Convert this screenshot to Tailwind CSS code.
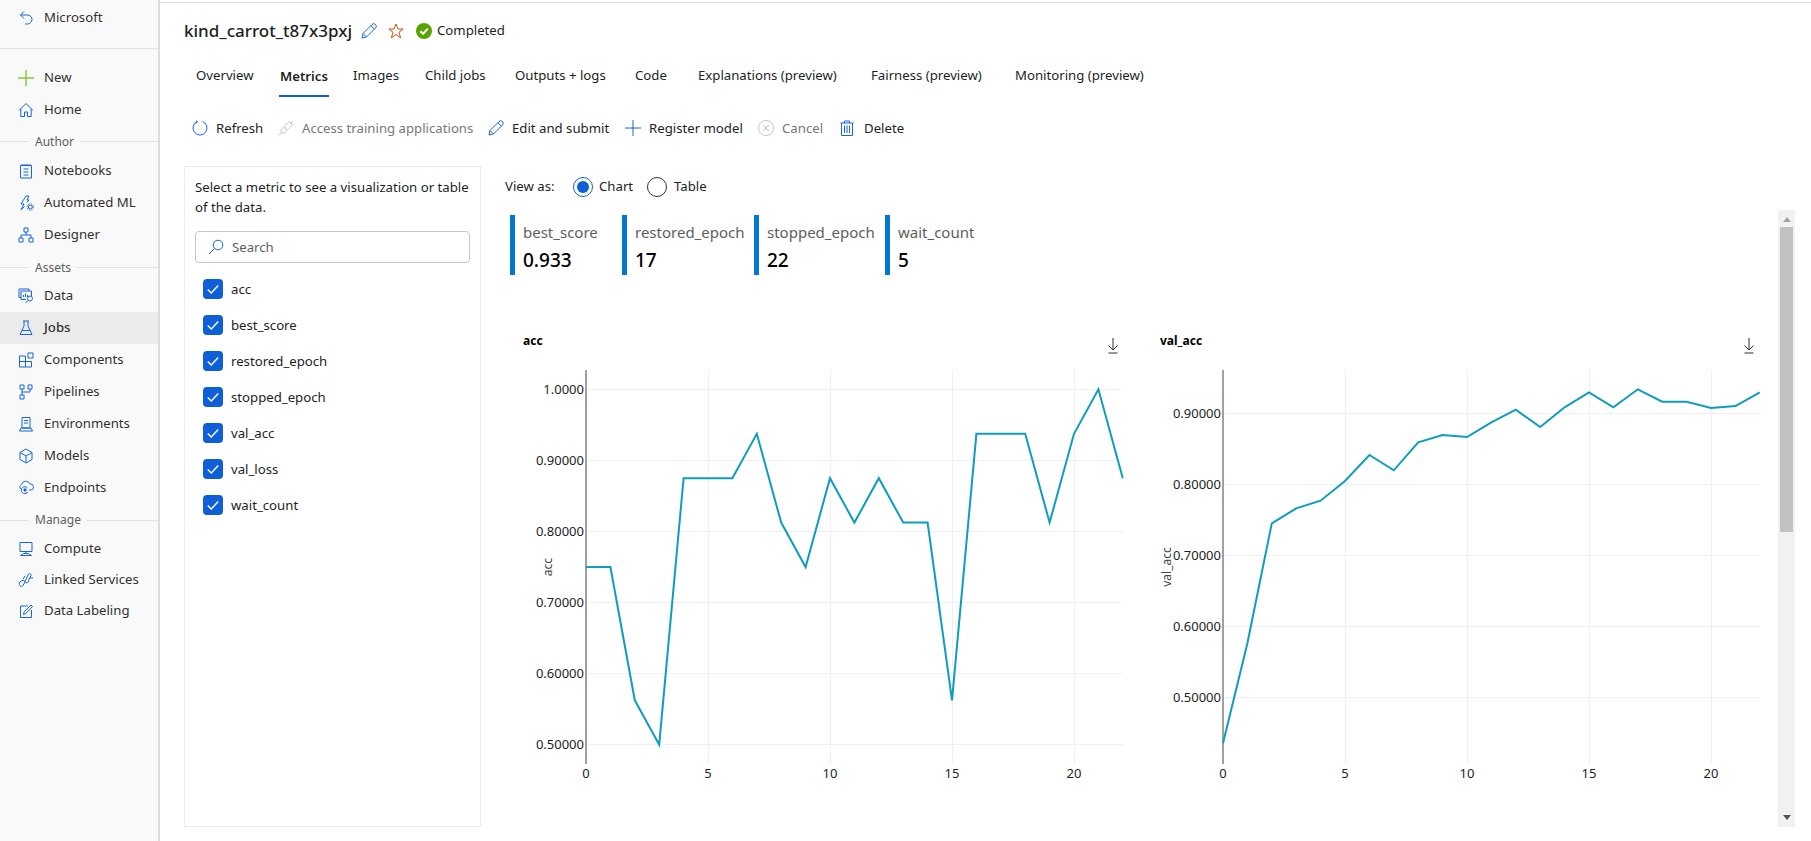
<!DOCTYPE html>
<html lang="en">
<head>
    <meta charset="UTF-8">
    <title>kind_carrot_t87x3pxj - Metrics</title>
    <script src="https://cdn.jsdelivr.net/npm/@tailwindcss/browser@4"></script>
</head>
<body class="relative flex w-[1811px] h-[841px] overflow-hidden bg-white text-[#323130] text-[13.2px] font-['Noto_Sans',sans-serif]">

    <!-- sidebar -->
    <nav class="flex-none w-[160px] h-full bg-[#f9f9f9] border-r-2 border-[#dcdcdc] pt-[2px]">
        <div class="flex items-center h-8 pl-[18px] gap-[10px]">
            <svg class="w-4 h-4 flex-none text-[#1565e0]" viewBox="0 0 16 16" fill="none" stroke="currentColor"><path d="M6 1.5L2.5 5L6 8.5M2.5 5H9.5A4.5 4.5 0 0 1 9.5 14H7"/></svg>
            <span>Microsoft</span>
        </div>
        <div class="h-[15px] border-b border-[#e1e1e1]"></div>
        <div class="flex items-center h-8 mt-[13px] pl-[18px] gap-[10px]">
            <svg class="w-4 h-4 flex-none text-[#8cc63f]" viewBox="0 0 16 16" fill="none" stroke="currentColor" stroke-width="1.5"><path d="M8 0V16M0 8H16"/></svg>
            <span>New</span>
        </div>
        <div class="flex items-center h-8 pl-[18px] gap-[10px]">
            <svg class="w-4 h-4 flex-none text-[#1565e0]" viewBox="0 0 16 16" fill="none" stroke="currentColor"><path d="M1 8.5L8 1.5L15 8.5M2.8 7V14.5H6.5V10H9.5V14.5H13.2V7"/></svg>
            <span>Home</span>
        </div>
        <div class="flex items-center h-[29px] pt-[2px] gap-[6px] text-[12px] text-[#605e5c]">
            <div class="w-[29px] h-px bg-[#e1e1e1]"></div><span>Author</span><div class="flex-1 h-px bg-[#e1e1e1]"></div>
        </div>
        <div class="flex items-center h-8 pl-[18px] gap-[10px]">
            <svg class="w-4 h-4 flex-none text-[#1565e0]" viewBox="0 0 16 16" fill="none" stroke="currentColor"><path d="M2.5 2.5H13.5V15H2.5ZM4 1V2.5M6 1V2.5M8 1V2.5M10 1V2.5M12 1V2.5M5.5 6H10.5M5.5 9H10.5M5.5 12H10.5"/></svg>
            <span>Notebooks</span>
        </div>
        <div class="flex items-center h-8 pl-[18px] gap-[10px]">
            <svg class="w-4 h-4 flex-none text-[#1565e0]" viewBox="0 0 16 16" fill="none" stroke="currentColor"><path d="M8 1H11L9 5H11L9 7.5M8 1L3 9H6L3 15L6.5 11.5"/><circle cx="12.3" cy="12" r="2"/><circle cx="12.3" cy="12" r="3.2" stroke-dasharray="1.2 1.3"/></svg>
            <span>Automated ML</span>
        </div>
        <div class="flex items-center h-8 pl-[18px] gap-[10px]">
            <svg class="w-4 h-4 flex-none text-[#1565e0]" viewBox="0 0 16 16" fill="none" stroke="currentColor"><path d="M6 1H10V5H6ZM1 11H5V15H1ZM11 11H15V15H11ZM8 5V8M3 11V8H13V11"/></svg>
            <span>Designer</span>
        </div>
        <div class="flex items-center h-[29px] pt-[4px] gap-[6px] text-[12px] text-[#605e5c]">
            <div class="w-[29px] h-px bg-[#e1e1e1]"></div><span>Assets</span><div class="flex-1 h-px bg-[#e1e1e1]"></div>
        </div>
        <div class="flex items-center h-8 pl-[18px] gap-[10px]">
            <svg class="w-4 h-4 flex-none text-[#1565e0]" viewBox="0 0 16 16" fill="none" stroke="currentColor"><path d="M3 9.5H1V1H11V3M3 3H13.5V8M3 3V11.5H8M5.5 9V7M7.5 9V5.5M9.5 9V7"/><circle cx="12" cy="10.5" r="2.5"/><path d="M10 12.5L7.5 15"/></svg>
            <span>Data</span>
        </div>
        <div class="flex items-center h-8 pl-[18px] gap-[10px] bg-[#ebebeb] font-medium">
            <svg class="w-4 h-4 flex-none text-[#1565e0]" viewBox="0 0 16 16" fill="none" stroke="currentColor"><path d="M5 1H11M6 1V6L2 14.5H14L10 6V1M4 10.5H12"/></svg>
            <span>Jobs</span>
        </div>
        <div class="flex items-center h-8 pl-[18px] gap-[10px]">
            <svg class="w-4 h-4 flex-none text-[#1565e0]" viewBox="0 0 16 16" fill="none" stroke="currentColor"><path d="M1.5 4H7.5V15H1.5ZM1.5 9.5H13.5V15H7.5M10 1H15V6H10Z"/></svg>
            <span>Components</span>
        </div>
        <div class="flex items-center h-8 pl-[18px] gap-[10px]">
            <svg class="w-4 h-4 flex-none text-[#1565e0]" viewBox="0 0 16 16" fill="none" stroke="currentColor"><path d="M2 1H6V5H2ZM10 1H14V5H10ZM2 11H6V15H2ZM4 5V11M4 8H12V5"/></svg>
            <span>Pipelines</span>
        </div>
        <div class="flex items-center h-8 pl-[18px] gap-[10px]">
            <svg class="w-4 h-4 flex-none text-[#1565e0]" viewBox="0 0 16 16" fill="none" stroke="currentColor"><path d="M4 1.5H12V12H4ZM6 4.5H10M6 7H10M1.5 15L3 12H13L14.5 15Z"/></svg>
            <span>Environments</span>
        </div>
        <div class="flex items-center h-8 pl-[18px] gap-[10px]">
            <svg class="w-4 h-4 flex-none text-[#1565e0]" viewBox="0 0 16 16" fill="none" stroke="currentColor"><path d="M8 1L14 4.5V11.5L8 15L2 11.5V4.5ZM2 4.5L8 8L14 4.5M8 8V15"/></svg>
            <span>Models</span>
        </div>
        <div class="flex items-center h-8 pl-[18px] gap-[10px]">
            <svg class="w-4 h-4 flex-none text-[#1565e0]" viewBox="0 0 16 16" fill="none" stroke="currentColor"><path d="M2.5 9A3 3 0 0 1 3.5 4.5A4.5 4.5 0 0 1 12 4A3 3 0 0 1 13 10H11M9.5 8A3.5 3.5 0 1 0 9.5 12.5L8 13"/><circle cx="7" cy="10" r="1.2" fill="currentColor"/></svg>
            <span>Endpoints</span>
        </div>
        <div class="flex items-center h-[29px] pt-[3px] gap-[6px] text-[12px] text-[#605e5c]">
            <div class="w-[29px] h-px bg-[#e1e1e1]"></div><span>Manage</span><div class="flex-1 h-px bg-[#e1e1e1]"></div>
        </div>
        <div class="flex items-center h-8 pl-[18px] gap-[10px]">
            <svg class="w-4 h-4 flex-none text-[#1565e0]" viewBox="0 0 16 16" fill="none" stroke="currentColor"><path d="M2 1.5H14V10.5H2ZM8 10.5V13M2.5 14.5H13.5L10.5 12.5H5.5Z"/></svg>
            <span>Compute</span>
        </div>
        <div class="flex items-center h-[30px] pl-[18px] gap-[10px]">
            <svg class="w-4 h-4 flex-none text-[#1565e0]" viewBox="0 0 16 16" fill="none" stroke="currentColor"><path d="M1.5 12.5A1.8 1.8 0 0 1 2 10L4 8.5A1.8 1.8 0 0 1 6.5 11L4.5 14A1.8 1.8 0 0 1 1.5 12.5ZM7 9.5L10.5 2A1.5 1.5 0 0 1 13 3.5L10.5 8.5A1.7 1.7 0 0 1 7 9.5ZM12 6H15M5 7L7 4"/></svg>
            <span>Linked Services</span>
        </div>
        <div class="flex items-center h-8 pl-[18px] gap-[10px]">
            <svg class="w-4 h-4 flex-none text-[#1565e0]" viewBox="0 0 16 16" fill="none" stroke="currentColor"><path d="M13.5 7V14.5H2.5V3H10M5.5 11.5L6.2 8.8L13 2L14.5 3.5L7.8 10.5Z"/></svg>
            <span>Data Labeling</span>
        </div>
    </nav>

    <!-- main -->
    <main class="flex-1 min-w-0 mt-[2px] border-t border-[#e1e1e1]">

        <div class="flex items-center h-[56px] pl-[24px]">
            <h1 class="w-[177px] flex-none text-[17px] font-medium text-[#201f1e]">kind_carrot_t87x3pxj</h1>
            <svg class="w-4 h-4 flex-none mr-[11px] text-[#1565e0]" viewBox="0 0 16 16" fill="none" stroke="currentColor"><path d="M1 15L2 10.5L11 1.5A1.6 1.6 0 0 1 14.5 5L5.5 14ZM2 10.5L5.5 14M9.8 2.7L13.3 6.2"/></svg>
            <svg class="w-4 h-4 flex-none mr-[12px] text-[#ca5010]" viewBox="0 0 16 16" fill="none" stroke="currentColor"><path d="M8 1L10 6H15.2L11 9.3L12.6 14.8L8 11.6L3.4 14.8L5 9.3L.8 6H6Z"/></svg>
            <svg class="w-4 h-4 flex-none mr-[5px]" viewBox="0 0 16 16" fill="none"><circle cx="8" cy="8" r="8" fill="#57a300"/><path d="M4.3 8.2L7 10.8L11.8 5.6" stroke="#fff" stroke-width="2"/></svg>
            <span class="text-[#201f1e]">Completed</span>
        </div>

        <div class="flex items-start h-[38px] pl-[36px] pt-[7px] text-[#201f1e]">
            <div class="w-[84px] flex-none">Overview</div>
            <div class="w-[73px] flex-none"><span class="inline-block -mx-px px-px pb-[9px] border-b-2 border-[#0f5fd7] font-semibold leading-5">Metrics</span></div>
            <div class="w-[72px] flex-none">Images</div>
            <div class="w-[90px] flex-none">Child jobs</div>
            <div class="w-[120px] flex-none">Outputs + logs</div>
            <div class="w-[63px] flex-none">Code</div>
            <div class="w-[173px] flex-none">Explanations (preview)</div>
            <div class="w-[144px] flex-none">Fairness (preview)</div>
            <div class="flex-none">Monitoring (preview)</div>
        </div>

        <div class="flex items-center h-8 mt-[15px] pl-[32px] text-[#201f1e]">
            <div class="flex items-center w-[86px] flex-none gap-2">
                <svg class="w-4 h-4 flex-none text-[#1565e0]" viewBox="0 0 16 16" fill="none" stroke="currentColor"><path d="M5 1.7A7 7 0 1 0 10.5 1.5M4.5 .5L5.5 2.2L3.2 3"/></svg>
                <span class="pt-[2px]">Refresh</span>
            </div>
            <div class="flex items-center w-[210px] flex-none gap-2 text-[#797775]">
                <svg class="w-4 h-4 flex-none text-[#c8c6c4]" viewBox="0 0 16 16" fill="none" stroke="currentColor"><path d="M.5 15.5L3.5 12.5M15 1L12 4M3.5 12.5A2.5 2.5 0 0 1 3.5 9L6 6.5L9.5 10L7 12.5A2.5 2.5 0 0 1 3.5 12.5ZM6.5 6L10 2.5A2.5 2.5 0 0 1 13.5 6L10 9.5M6 9.5L8 7.5"/></svg>
                <span class="pt-[2px]">Access training applications</span>
            </div>
            <div class="flex items-center w-[137px] flex-none gap-2">
                <svg class="w-4 h-4 flex-none text-[#1565e0]" viewBox="0 0 16 16" fill="none" stroke="currentColor"><path d="M1 15L2 10.5L11 1.5A1.6 1.6 0 0 1 14.5 5L5.5 14ZM2 10.5L5.5 14M9.8 2.7L13.3 6.2"/></svg>
                <span class="pt-[2px]">Edit and submit</span>
            </div>
            <div class="flex items-center w-[133px] flex-none gap-2">
                <svg class="w-4 h-4 flex-none text-[#1565e0]" viewBox="0 0 16 16" fill="none" stroke="currentColor"><path d="M8 0V16M0 8H16"/></svg>
                <span class="pt-[2px]">Register model</span>
            </div>
            <div class="flex items-center w-[81px] flex-none gap-2 text-[#797775]">
                <svg class="w-4 h-4 flex-none text-[#c8c6c4]" viewBox="0 0 16 16" fill="none" stroke="currentColor"><circle cx="8" cy="8" r="7.5"/><path d="M5 5L11 11M11 5L5 11"/></svg>
                <span class="pt-[2px]">Cancel</span>
            </div>
            <div class="flex items-center flex-none gap-[9px]">
                <svg class="w-4 h-4 flex-none text-[#1565e0]" viewBox="0 0 16 16" fill="none" stroke="currentColor"><path d="M1.5 3H14.5M5.5 3V1H10.5V3M2.5 3V15.5H13.5V3M5.5 5.5V13M8 5.5V13M10.5 5.5V13"/></svg>
                <span class="pt-[2px]">Delete</span>
            </div>
        </div>

        <div class="flex items-start mt-[22px] pl-[24px]">

            <!-- metric picker -->
            <aside class="flex-none w-[297px] h-[661px] border border-[#edebe9] px-[10px] pt-[10px]">
                <p class="leading-5 whitespace-nowrap text-[#201f1e]">Select a metric to see a visualization or table<br>of the data.</p>
                <div class="flex items-center h-8 mt-[14px] pl-[12px] gap-2 border border-[#c8c6c4] rounded-sm text-[#605e5c]">
                    <svg class="w-4 h-4 flex-none text-[#1565e0]" viewBox="0 0 16 16" fill="none" stroke="currentColor"><circle cx="10" cy="6" r="4.8"/><path d="M6.6 9.4L1 15"/></svg>
                    <span class="pt-[2px]">Search</span>
                </div>
                <ul class="flex flex-col gap-4 mt-[16px] pl-[8px] text-[#201f1e]">
                    <li class="flex items-center gap-2 h-5">
                        <span class="flex items-center justify-center w-5 h-5 rounded-sm bg-[#0f5fd7]"><svg class="w-3.5 h-3.5" viewBox="0 0 12 12" fill="none" stroke="#fff" stroke-width="1.2"><path d="M1.5 6.5L4.5 9.5L10.5 3"/></svg></span>
                        <span class="pt-px">acc</span>
                    </li>
                    <li class="flex items-center gap-2 h-5">
                        <span class="flex items-center justify-center w-5 h-5 rounded-sm bg-[#0f5fd7]"><svg class="w-3.5 h-3.5" viewBox="0 0 12 12" fill="none" stroke="#fff" stroke-width="1.2"><path d="M1.5 6.5L4.5 9.5L10.5 3"/></svg></span>
                        <span class="pt-px">best_score</span>
                    </li>
                    <li class="flex items-center gap-2 h-5">
                        <span class="flex items-center justify-center w-5 h-5 rounded-sm bg-[#0f5fd7]"><svg class="w-3.5 h-3.5" viewBox="0 0 12 12" fill="none" stroke="#fff" stroke-width="1.2"><path d="M1.5 6.5L4.5 9.5L10.5 3"/></svg></span>
                        <span class="pt-px">restored_epoch</span>
                    </li>
                    <li class="flex items-center gap-2 h-5">
                        <span class="flex items-center justify-center w-5 h-5 rounded-sm bg-[#0f5fd7]"><svg class="w-3.5 h-3.5" viewBox="0 0 12 12" fill="none" stroke="#fff" stroke-width="1.2"><path d="M1.5 6.5L4.5 9.5L10.5 3"/></svg></span>
                        <span class="pt-px">stopped_epoch</span>
                    </li>
                    <li class="flex items-center gap-2 h-5">
                        <span class="flex items-center justify-center w-5 h-5 rounded-sm bg-[#0f5fd7]"><svg class="w-3.5 h-3.5" viewBox="0 0 12 12" fill="none" stroke="#fff" stroke-width="1.2"><path d="M1.5 6.5L4.5 9.5L10.5 3"/></svg></span>
                        <span class="pt-px">val_acc</span>
                    </li>
                    <li class="flex items-center gap-2 h-5">
                        <span class="flex items-center justify-center w-5 h-5 rounded-sm bg-[#0f5fd7]"><svg class="w-3.5 h-3.5" viewBox="0 0 12 12" fill="none" stroke="#fff" stroke-width="1.2"><path d="M1.5 6.5L4.5 9.5L10.5 3"/></svg></span>
                        <span class="pt-px">val_loss</span>
                    </li>
                    <li class="flex items-center gap-2 h-5">
                        <span class="flex items-center justify-center w-5 h-5 rounded-sm bg-[#0f5fd7]"><svg class="w-3.5 h-3.5" viewBox="0 0 12 12" fill="none" stroke="#fff" stroke-width="1.2"><path d="M1.5 6.5L4.5 9.5L10.5 3"/></svg></span>
                        <span class="pt-px">wait_count</span>
                    </li>
                </ul>
            </aside>

            <!-- charts -->
            <section class="flex-none w-[1280px] ml-[24px]">
                <div class="flex items-center h-5 mt-[11px] text-[#201f1e]">
                    <span class="w-[68px] flex-none">View as:</span>
                    <span class="flex items-center justify-center w-5 h-5 flex-none rounded-full border border-[#0f5fd7]"><span class="w-3 h-3 rounded-full bg-[#0f5fd7]"></span></span>
                    <span class="w-[54px] flex-none pl-[6px]">Chart</span>
                    <span class="w-5 h-5 flex-none rounded-full border border-[#323130]"></span>
                    <span class="pl-[7px]">Table</span>
                </div>

                <div class="flex h-[60px] mt-[18px] ml-[5px]">
                    <div class="w-[112px] flex-none border-l-[5px] border-[#0078d4] pl-2 pt-[5px]">
                        <div class="text-[15px] leading-6 text-[#605e5c]">best_score</div>
                        <div class="mt-[2px] text-[19px] leading-[28px] font-medium text-black">0.933</div>
                    </div>
                    <div class="w-[132px] flex-none border-l-[5px] border-[#0078d4] pl-2 pt-[5px]">
                        <div class="text-[15px] leading-6 text-[#605e5c]">restored_epoch</div>
                        <div class="mt-[2px] text-[19px] leading-[28px] font-medium text-black">17</div>
                    </div>
                    <div class="w-[131px] flex-none border-l-[5px] border-[#0078d4] pl-2 pt-[5px]">
                        <div class="text-[15px] leading-6 text-[#605e5c]">stopped_epoch</div>
                        <div class="mt-[2px] text-[19px] leading-[28px] font-medium text-black">22</div>
                    </div>
                    <div class="flex-none border-l-[5px] border-[#0078d4] pl-2 pt-[5px]">
                        <div class="text-[15px] leading-6 text-[#605e5c]">wait_count</div>
                        <div class="mt-[2px] text-[19px] leading-[28px] font-medium text-black">5</div>
                    </div>
                </div>

                <div class="flex mt-[56px]">
                    <div class="w-[640px] flex-none">
                        <div class="flex justify-between h-[29px] pl-[18px] pr-[24px]">
                            <h3 class="text-[12px] leading-5 font-bold text-black">acc</h3>
                            <svg class="w-4 h-4 mt-[7px] text-[#323130]" viewBox="0 0 16 16" fill="none" stroke="currentColor"><path d="M8 0V11.5M3.5 7.5L8 12L12.5 7.5M3.5 15H12.5"/></svg>
                        </div>
                        <svg class="block w-[640px] h-[430px]" viewBox="505 360 640 430" fill="none">
                            <g stroke="#f0f0f0">
                                <path d="M586 389.5H1123M586 460.5H1123M586 531.5H1123M586 602.5H1123M586 673.5H1123M586 744.5H1123"/>
                                <path d="M708.5 370V764M830.5 370V764M952.5 370V764M1074.5 370V764"/>
                            </g>
                            <path d="M586 370V764" stroke="#808080" stroke-width="1.5"/>
                            <polyline stroke="#0e9dbe" stroke-width="2" points="586,567 610.4,567 634.8,700.3 659.2,744.7 683.6,478.2 708,478.2 732.4,478.2 756.8,433.8 781.2,522.6 805.6,567 830,478.2 854.4,522.6 878.8,478.2 903.2,522.6 927.6,522.6 952,700.3 976.4,433.8 1000.8,433.8 1025.2,433.8 1049.6,522.6 1074,433.8 1098.4,389.3 1122.8,478.2"/>
                            <g class="fill-[#201f1e] text-[13px]" text-anchor="end">
                                <text x="584" y="394">1.0000</text>
                                <text x="584" y="465">0.90000</text>
                                <text x="584" y="536">0.80000</text>
                                <text x="584" y="607">0.70000</text>
                                <text x="584" y="678">0.60000</text>
                                <text x="584" y="749">0.50000</text>
                            </g>
                            <g class="fill-[#201f1e] text-[13px]" text-anchor="middle">
                                <text x="586" y="778">0</text>
                                <text x="708" y="778">5</text>
                                <text x="830" y="778">10</text>
                                <text x="952" y="778">15</text>
                                <text x="1074" y="778">20</text>
                            </g>
                            <text class="fill-[#444444] text-[12px]" text-anchor="middle" transform="translate(552 567) rotate(-90)">acc</text>
                        </svg>
                    </div>
                    <div class="w-[640px] flex-none">
                        <div class="flex justify-between h-[29px] pl-[15px] pr-[28px]">
                            <h3 class="text-[12px] leading-5 font-bold text-black">val_acc</h3>
                            <svg class="w-4 h-4 mt-[7px] text-[#323130]" viewBox="0 0 16 16" fill="none" stroke="currentColor"><path d="M8 0V11.5M3.5 7.5L8 12L12.5 7.5M3.5 15H12.5"/></svg>
                        </div>
                        <svg class="block w-[640px] h-[430px]" viewBox="1145 360 640 430" fill="none">
                            <g stroke="#f0f0f0">
                                <path d="M1223 413.5H1760M1223 484.5H1760M1223 555.5H1760M1223 626.5H1760M1223 697.5H1760"/>
                                <path d="M1345.5 370V764M1467.5 370V764M1589.5 370V764M1711.5 370V764"/>
                            </g>
                            <path d="M1223 370V764" stroke="#808080" stroke-width="1.5"/>
                            <polyline stroke="#0e9dbe" stroke-width="2" points="1223,743.3 1247.4,643.3 1271.8,523.3 1296.2,508.3 1320.6,500.7 1345,481 1369.4,455 1393.8,470.3 1418.2,442.3 1442.6,435 1467,437 1491.4,422.3 1515.8,409.7 1540.2,427 1564.6,407.3 1589,392.3 1613.4,407.3 1637.8,389.3 1662.2,401.7 1686.6,401.7 1711,408 1735.4,406 1759.8,392.3"/>
                            <g class="fill-[#201f1e] text-[13px]" text-anchor="end">
                                <text x="1221" y="418">0.90000</text>
                                <text x="1221" y="489">0.80000</text>
                                <text x="1221" y="560">0.70000</text>
                                <text x="1221" y="631">0.60000</text>
                                <text x="1221" y="702">0.50000</text>
                            </g>
                            <g class="fill-[#201f1e] text-[13px]" text-anchor="middle">
                                <text x="1223" y="778">0</text>
                                <text x="1345" y="778">5</text>
                                <text x="1467" y="778">10</text>
                                <text x="1589" y="778">15</text>
                                <text x="1711" y="778">20</text>
                            </g>
                            <text class="fill-[#444444] text-[12px]" text-anchor="middle" transform="translate(1171 567) rotate(-90)">val_acc</text>
                        </svg>
                    </div>
                </div>
            </section>
        </div>
    </main>

    <!-- scrollbar over the chart pane -->
    <div class="absolute left-[1778px] top-[210px] flex flex-col items-center w-[17px] h-[617px] bg-[#f1f1f1]">
        <svg class="w-[8px] h-[5px] mt-[7px] flex-none" viewBox="0 0 8 5"><path d="M4 0L8 5H0Z" fill="#a3a3a3"/></svg>
        <div class="w-[13px] h-[305px] mt-[5px] flex-none bg-[#c1c1c1]"></div>
        <svg class="w-[8px] h-[5px] mt-auto mb-[7px] flex-none" viewBox="0 0 8 5"><path d="M0 0H8L4 5Z" fill="#505050"/></svg>
    </div>
</body>
</html>
